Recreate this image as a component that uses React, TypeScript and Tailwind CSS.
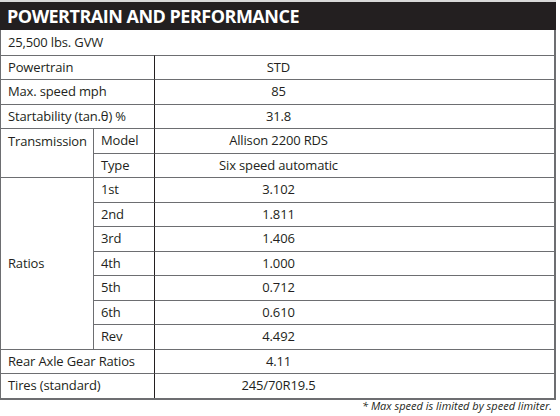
import React from "react";

const line = "border-[#6d6e71]";

function Val({ children }: { children: React.ReactNode }) {
  return (
    <div className={`border-t ${line} border-l border-l-[#231f20] flex items-center`}>
      <div className="w-[247px] text-center">{children}</div>
    </div>
  );
}

export default function App() {
  const ratios: [string, string][] = [
    ["1st", "3.102"],
    ["2nd", "1.811"],
    ["3rd", "1.406"],
    ["4th", "1.000"],
    ["5th", "0.712"],
    ["6th", "0.610"],
    ["Rev", "4.492"],
  ];
  const simple = (label: string, val: string) => (
    <React.Fragment key={label}>
      <div className={`col-span-2 border-t ${line} flex items-center pl-[7px]`}>{label}</div>
      <Val>{val}</Val>
    </React.Fragment>
  );
  return (
    <div
      className="w-[560px] h-[416px] bg-white text-[#231f20] pt-[2px]"
      style={{ fontFamily: '"Open Sans", "Liberation Sans", sans-serif' }}
    >
      <div className="w-[556px] border-t-2 border-[#d9d9d9] -mt-[2px]" />
      <div className="w-[556px] h-[28px] bg-[#231f20] flex items-center pl-[7px]">
        <span className="text-white font-bold text-[18px] tracking-[-0.5px] leading-none">
          POWERTRAIN AND PERFORMANCE
        </span>
      </div>
      <div
        className={`w-[556px] grid grid-cols-[92px_61px_1fr] auto-rows-[24.53px] border-l border-r-2 border-b-2 ${line} text-[13px] tracking-[-0.15px] leading-none`}
      >
        <div className="col-span-3 flex items-center pl-[7px]">25,500 lbs. GVW</div>
        {simple("Powertrain", "STD")}
        {simple("Max. speed mph", "85")}
        {simple("Startability (tan.θ) %", "31.8")}
        <div className={`row-span-2 border-t ${line} pl-[7px] pt-[6px]`}>Transmission</div>
        <div className={`border-t border-l ${line} flex items-center pl-[7px]`}>Model</div>
        <Val>Allison 2200 RDS</Val>
        <div className={`border-t border-l ${line} flex items-center pl-[7px]`}>Type</div>
        <Val>Six speed automatic</Val>
        <div className={`row-span-7 border-t ${line} flex items-center pl-[7px]`}>Ratios</div>
        {ratios.map(([k, v]) => (
          <React.Fragment key={k}>
            <div className={`border-t border-l ${line} flex items-center pl-[7px]`}>{k}</div>
            <Val>{v}</Val>
          </React.Fragment>
        ))}
        {simple("Rear Axle Gear Ratios", "4.11")}
        {simple("Tires (standard)", "245/70R19.5")}
      </div>
      <div className="w-[552px] text-right italic text-[11px] leading-none mt-0">
        * Max speed is limited by speed limiter.
      </div>
    </div>
  );
}
